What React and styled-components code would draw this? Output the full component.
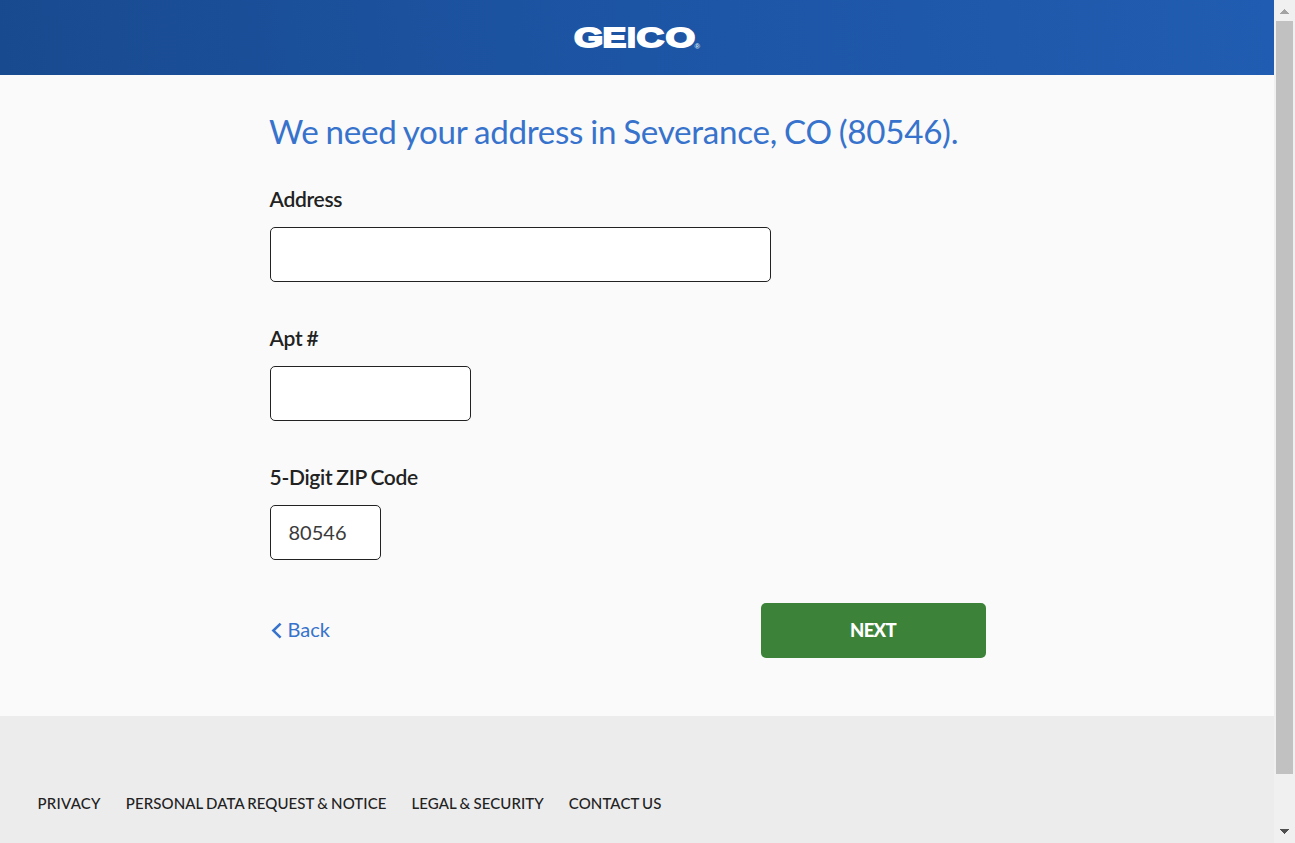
import React from "react";
import styled, { createGlobalStyle } from "styled-components";

const GlobalStyle = createGlobalStyle`
  * { box-sizing: border-box; }
  body { margin: 0; overflow: hidden; background: #fafafa; font-family: Lato, sans-serif; color: #222; }
`;

const Window = styled.div`
  display: flex;
  width: 100%;
  height: 843px;
  overflow: hidden;
`;

const Page = styled.div`
  flex: 1;
  display: flex;
  flex-direction: column;
  background: #fafafa;
`;

const Header = styled.header`
  display: flex;
  justify-content: center;
  height: 75px;
  padding-top: 15px;
  background: linear-gradient(82deg, #184a8f, #1d55a5 50%, #205cb1);
`;

const Main = styled.main`
  display: flex;
  flex-direction: column;
  width: 716px;
  height: 641px;
  margin-left: 270px;
  padding-top: 32px;
`;

const Title = styled.h1`
  margin: 0 0 30px -1px;
  height: 48px;
  font-size: 33.2px;
  line-height: 48px;
  font-weight: 400;
  letter-spacing: -0.3px;
  word-spacing: -1.1px;
  color: #3773cc;
  white-space: nowrap;
`;

const Field = styled.label`
  display: flex;
  flex-direction: column;
  height: 139px;
`;

const LabelText = styled.span`
  margin-left: -0.5px;
  font-size: 21px;
  line-height: 28px;
  font-weight: 600;
  letter-spacing: -0.3px;
  word-spacing: -0.9px;
`;

const Input = styled.input`
  width: ${(p) => p.$width}px;
  height: 55px;
  margin-top: 14px;
  padding: 0 17px 2px 17.5px;
  border: 1px solid #222;
  border-radius: 5px;
  background: #fff;
  color: #3a3a3a;
  font: 400 20px Lato, sans-serif;
  outline: none;
`;

const Actions = styled.div`
  display: flex;
  align-items: center;
  justify-content: space-between;
  height: 55px;
  margin-top: 1px;
`;

const BackLink = styled.a`
  display: flex;
  align-items: center;
  gap: 5.5px;
  color: #3773cc;
  font-size: 20px;
  line-height: 28px;
`;

const BackText = styled.span`
  padding-bottom: 3px;
`;

const NextButton = styled.button`
  width: 225px;
  height: 55px;
  padding: 0 1px 2px 0;
  border: 0;
  border-radius: 5px;
  background: #3c8339;
  color: #fff;
  font: 900 18.5px Lato, sans-serif;
  letter-spacing: -0.7px;
`;

const Footer = styled.footer`
  flex: 1;
  display: flex;
  align-items: flex-start;
  gap: 25px;
  padding: 76px 0 0 37.5px;
  background: #ececec;
`;

const FooterLink = styled.a`
  font-size: 15px;
  line-height: 22px;
  font-weight: 500;
  letter-spacing: 0.09px;
  word-spacing: -0.8px;
  white-space: nowrap;

  &:first-child {
    letter-spacing: 0.25px;
  }
`;

const Scrollbar = styled.div`
  display: flex;
  flex-direction: column;
  align-items: center;
  width: 21px;
  background: #f0f0f0;
`;

const Arrow = styled.svg`
  display: block;
  margin-top: ${(p) => p.$top}px;
`;

const Thumb = styled.div`
  width: 17px;
  height: 753px;
  margin-top: 7px;
  background: #c1c1c1;
`;

const LogoSvg = styled.svg`
  display: block;
  overflow: visible;
`;

const LogoLetter = styled.text`
  font: 700 28.5px "Liberation Sans", sans-serif;
  fill: #fff;
  stroke: #fff;
  stroke-width: 1.8px;
`;

const RegisteredMark = styled.text`
  font: 700 7.5px "Liberation Sans", sans-serif;
  fill: #dce7f5;
`;

const wordmark = [
  { char: "G", x: 0.9, stretch: 1.32 },
  { char: "E", x: 29.5, stretch: 1.25 },
  { char: "I", x: 54, stretch: 1.12 },
  { char: "C", x: 63.6, stretch: 1.34 },
  { char: "O", x: 92.4, stretch: 1.34 },
];

const Logo = () => (
  <LogoSvg width="140" height="46" viewBox="-6 -7 140 46" aria-label="GEICO">
    {wordmark.map((l) => (
      <LogoLetter key={l.char} transform={`translate(${l.x} 24.5) scale(${l.stretch} 1)`}>{l.char}</LogoLetter>
    ))}
    <RegisteredMark x="121.5" y="26.5">®</RegisteredMark>
  </LogoSvg>
);

const links = ["PRIVACY", "PERSONAL DATA REQUEST & NOTICE", "LEGAL & SECURITY", "CONTACT US"];

export default function App() {
  return (
    <>
      <GlobalStyle />
      <Window>
        <Page>
          <Header><Logo /></Header>
          <Main>
            <Title>We need your address in Severance, CO (80546).</Title>
            <Field><LabelText>Address</LabelText><Input $width={501} /></Field>
            <Field><LabelText>Apt #</LabelText><Input $width={201} /></Field>
            <Field><LabelText>5-Digit ZIP Code</LabelText><Input $width={111} defaultValue="80546" /></Field>
            <Actions>
              <BackLink>
                <svg width="12" height="17" viewBox="0 0 12 17" fill="none" stroke="#3773cc" strokeWidth="2.6">
                  <path d="M10.6 1.6 3.4 8.6 10.6 15.6" />
                </svg>
                <BackText>Back</BackText>
              </BackLink>
              <NextButton>NEXT</NextButton>
            </Actions>
          </Main>
          <Footer>
            {links.map((l) => <FooterLink key={l}>{l}</FooterLink>)}
          </Footer>
        </Page>
        <Scrollbar>
          <Arrow $top={9} width="9" height="5" viewBox="0 0 9 5" shapeRendering="crispEdges"><path d="M0 5 4.5 0 9 5Z" fill="#a3a3a3" /></Arrow>
          <Thumb />
          <Arrow $top={55} width="9" height="5" viewBox="0 0 9 5" shapeRendering="crispEdges"><path d="M0 0 4.5 5 9 0Z" fill="#505050" /></Arrow>
        </Scrollbar>
      </Window>
    </>
  );
}
